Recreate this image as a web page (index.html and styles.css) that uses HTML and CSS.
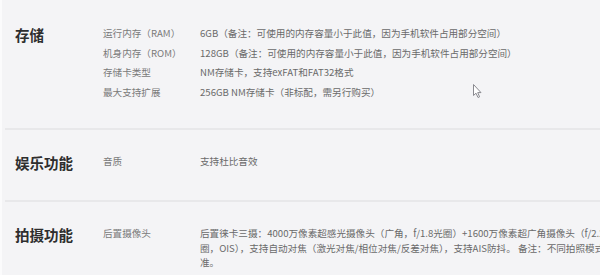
FILE: index.html
```html
<!DOCTYPE html>
<html lang="zh-CN">
<head>
<meta charset="utf-8">
<title>规格参数</title>
<link rel="stylesheet" href="styles.css">
</head>
<body>
<div class="panel">
  <section class="spec">
    <h2 class="spec-title">存储</h2>
    <div class="spec-rows">
      <div class="row"><div class="label">运行内存（RAM）</div><div class="value">6GB（备注：可使用的内存容量小于此值，因为手机软件占用部分空间）</div></div>
      <div class="row"><div class="label">机身内存（ROM）</div><div class="value">128GB（备注：可使用的内存容量小于此值，因为手机软件占用部分空间）</div></div>
      <div class="row"><div class="label">存储卡类型</div><div class="value">NM存储卡，支持exFAT和FAT32格式</div></div>
      <div class="row"><div class="label">最大支持扩展</div><div class="value">256GB NM存储卡（非标配，需另行购买）</div></div>
    </div>
  </section>
  <section class="spec">
    <h2 class="spec-title">娱乐功能</h2>
    <div class="spec-rows">
      <div class="row"><div class="label">音质</div><div class="value">支持杜比音效</div></div>
    </div>
  </section>
  <section class="spec">
    <h2 class="spec-title">拍摄功能</h2>
    <div class="spec-rows">
      <div class="row"><div class="label">后置摄像头</div><div class="value"><span class="line">后置徕卡三摄：4000万像素超感光摄像头（广角，f/1.8光圈）+1600万像素超广角摄像头（f/2.2光圈）+800万像素长焦摄像头（f/2.4光</span><span class="line">圈，OIS），支持自动对焦（激光对焦/相位对焦/反差对焦），支持AIS防抖。 备注：不同拍照模式下像素可能有所差异，请以实际为</span><span class="line">准。</span></div></div>
      <div class="row"><div class="label">前置摄像头</div><div class="value">前置摄像头：3200万像素摄像头（f/2.0光圈），支持固定焦距，支持人像模式与3D动态全景</div></div>
    </div>
  </section>
</div>
<svg class="cursor" width="12" height="16" viewBox="0 0 12 16" aria-hidden="true">
  <path d="M1.5 1.5 L1.5 12.5 L4 10.2 L6 14.5 L7.6 13.8 L5.7 9.6 L9 9.6 Z" fill="#fff" stroke="#8a8a90" stroke-width="1" stroke-linejoin="round"/>
</svg>
</body>
</html>
```
FILE: styles.css
```css
html, body {
  margin: 0;
  padding: 0;
}
body {
  background: #fbfbfc;
  width: 600px;
  height: 275px;
  overflow: hidden;
  position: relative;
  font-family: "Noto Sans CJK SC", "Liberation Sans", sans-serif;
}
.panel {
  margin-left: 2px;
  padding-top: 2px;
  background: #f4f4f6;
  width: 900px;
  min-height: 300px;
}
.spec {
  display: flex;
  margin-left: 3px;
  padding: 24px 0 24px 10px;
  border-bottom: 2px solid #e8e8ea;
}
.spec-title {
  width: 88px;
  flex: none;
  margin: -2px 0 0;
  padding-bottom: 3px;
  font-size: 14.5px;
  line-height: 21px;
  font-weight: 700;
  color: #2e2e2e;
}
.spec-rows {
  display: flex;
  flex-direction: column;
}
.row {
  display: flex;
  margin-bottom: 5px;
  font-size: 9.6px;
  line-height: 14.5px;
}
.label {
  width: 97px;
  flex: none;
  color: #7a7a7a;
}
.value {
  color: #6a6a6a;
  white-space: nowrap;
}
.line {
  display: block;
}
.cursor {
  position: absolute;
  left: 472px;
  top: 83px;
}
```
